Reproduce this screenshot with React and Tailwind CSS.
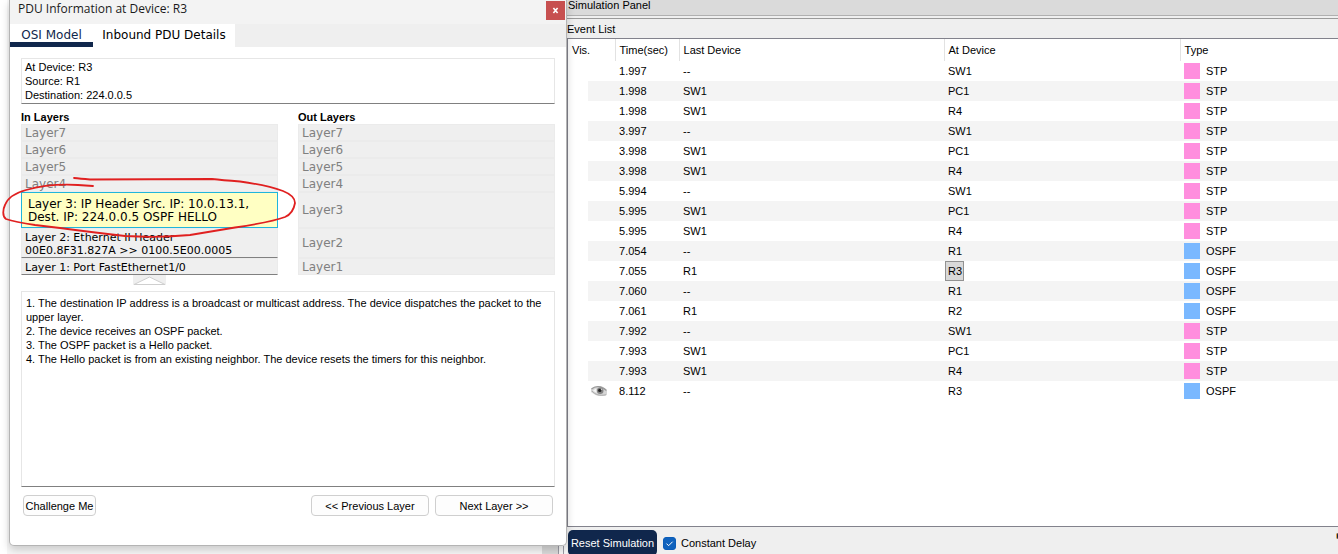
import React from "react";

const STP = "bg-[#ff8ede]";
const OSPF = "bg-[#7ab8ff]";

const events = [
  ["1.997", "--", "SW1", "STP"],
  ["1.998", "SW1", "PC1", "STP"],
  ["1.998", "SW1", "R4", "STP"],
  ["3.997", "--", "SW1", "STP"],
  ["3.998", "SW1", "PC1", "STP"],
  ["3.998", "SW1", "R4", "STP"],
  ["5.994", "--", "SW1", "STP"],
  ["5.995", "SW1", "PC1", "STP"],
  ["5.995", "SW1", "R4", "STP"],
  ["7.054", "--", "R1", "OSPF"],
  ["7.055", "R1", "R3", "OSPF"],
  ["7.060", "--", "R1", "OSPF"],
  ["7.061", "R1", "R2", "OSPF"],
  ["7.992", "--", "SW1", "STP"],
  ["7.993", "SW1", "PC1", "STP"],
  ["7.993", "SW1", "R4", "STP"],
  ["8.112", "--", "R3", "OSPF"],
];
const SELECTED = 10;

const outLayers = [
  ["Layer7", "h-[17px]"],
  ["Layer6", "h-[17px]"],
  ["Layer5", "h-[17px]"],
  ["Layer4", "h-[17px]"],
  ["Layer3", "h-9"],
  ["Layer2", "h-[30px]"],
  ["Layer1", "h-[17px]"],
];

const verdana = "font-['DejaVu_Sans',Verdana,sans-serif]";

function EyeIcon() {
  return (
    <svg viewBox="0 0 16 12" className="h-3 w-4" role="img" aria-label="Visible">
      <path d="M0 4 C3 1 9 0 13 2.5 L16 6 V10 C11 12 5 11.5 0 7Z" fill="#d6d6d6" />
      <path d="M0.5 4 C4 0.8 10 0.4 15.5 5.5" fill="none" stroke="#9a9a9a" strokeWidth="1.4" />
      <path d="M1 6 C4 9.8 9 11 15 9.8" fill="none" stroke="#ababab" strokeWidth="1" />
      <path d="M2 5.5 L5 3.5 L5.5 8Z" fill="#f6f6f6" />
      <circle cx="9.2" cy="5.8" r="3.3" fill="#858585" />
      <circle cx="8.8" cy="5.4" r="1.7" fill="#262626" />
      <circle cx="10.6" cy="4.4" r="0.8" fill="#c8c8c8" />
    </svg>
  );
}

function LayerRow({ size, children }) {
  return (
    <li className={`flex items-center border border-[#ebebeb] bg-[#efefef] px-[3px] pt-px text-[#808080] ${size}`}>
      {children}
    </li>
  );
}

function PushButton({ className, children }) {
  return (
    <button type="button" className={`h-[21px] rounded-[4px] border border-[#cfcfcf] bg-[#fdfdfd] text-center ${className}`}>
      {children}
    </button>
  );
}

function PduWindow() {
  return (
    <section className="relative z-10 flex min-h-0 flex-1 flex-col rounded-b-[5px] border border-t-0 border-[#b4b4b4] bg-white shadow-[0_4px_8px_rgba(0,0,0,0.18)]">
      <header className="flex h-6 items-start justify-between bg-[#f3f3f3] pl-2 pr-px">
        <h1 className="font-['Open_Sans','Segoe_UI',sans-serif] text-[12px] leading-[18px] text-[#1a1a1a]">
          PDU Information at Device: R3
        </h1>
        <button type="button" aria-label="Close" className="mt-px flex h-[19px] w-[19px] items-center justify-center bg-[#c75050]">
          <svg viewBox="0 0 7 7" className="h-[7px] w-[7px]">
            <path d="M1.4 1 L5.6 6 M5.6 1 L1.4 6" stroke="#fff" strokeWidth="1.6" />
          </svg>
        </button>
      </header>

      <div role="tablist" className={`flex h-[23px] bg-[#efefef] text-[12px] ${verdana}`}>
        <button type="button" role="tab" aria-selected="true" className="flex h-full w-[83px] items-end justify-center whitespace-nowrap border-b-[5px] border-[#10274c] bg-white leading-[13px] text-[#10274c]">
          OSI Model
        </button>
        <button type="button" role="tab" aria-selected="false" className="flex h-full w-[142px] items-end justify-center whitespace-nowrap border-b-[5px] border-white bg-white leading-[13px]">
          Inbound PDU Details
        </button>
      </div>

      <div className="flex min-h-0 flex-1 flex-col px-[11px] pt-[11px]">
        <div className="border border-[#e6e6e6] border-b-[#808080] px-[3px] py-px leading-[14px]">
          <p>At Device: R3</p>
          <p>Source: R1</p>
          <p>Destination: 224.0.0.5</p>
        </div>

        <div className="mt-1.5 grid grid-cols-2 gap-5">
          <div className="relative">
            <h2 className="font-bold leading-[14px]">In Layers</h2>
            <ul className={`text-[12px] leading-[13px] ${verdana}`}>
              <LayerRow size="h-[17px]">Layer7</LayerRow>
              <LayerRow size="h-[17px]">Layer6</LayerRow>
              <LayerRow size="h-[17px]">Layer5</LayerRow>
              <LayerRow size="h-[17px]">Layer4</LayerRow>
              <li className="flex h-9 items-center border border-[#1fb5dc] bg-[#ffffc3] px-1.5 pt-px">
                Layer 3: IP Header Src. IP: 10.0.13.1,<br />Dest. IP: 224.0.0.5 OSPF HELLO
              </li>
              <li className="flex h-[30px] items-center border border-[#ebebeb] border-b-[#808080] bg-[#efefef] px-[3px] pt-px text-[11px]">
                Layer 2: Ethernet II Header<br />00E0.8F31.827A &gt;&gt; 0100.5E00.0005
              </li>
              <li className="flex h-[17px] items-center border border-[#ebebeb] border-b-[#808080] bg-[#efefef] px-[3px] pt-px text-[11px]">
                Layer 1: Port FastEthernet1/0
              </li>
            </ul>
            <svg viewBox="0 0 300 76" className="pointer-events-none absolute -left-[21px] top-[61px] h-[76px] w-[300px] max-w-none" aria-hidden="true">
              <path
                d="M74 7 Q80 7.5 90 8.5 L212 8 Q222 9 240 10.5 Q266 14 283 20 C293 24 295 28 295 32 C294 38 292 43 285 46 Q272 51 235 56.5 L190 64 Q160 67 125 65 Q90 61 60 57 L35 54 Q15 51 6 48 C2 45 3 38 5 34 C8 26 15 22 26 19 C40 15 60 13 78 14 L93 15"
                fill="none" stroke="#e02020" strokeWidth="1.8" strokeLinecap="round" strokeLinejoin="round"
              />
            </svg>
          </div>
          <div>
            <h2 className="font-bold leading-[14px]">Out Layers</h2>
            <ul className={`text-[12px] leading-[13px] ${verdana}`}>
              {outLayers.map(([name, size]) => (
                <LayerRow key={name} size={size}>{name}</LayerRow>
              ))}
            </ul>
          </div>
        </div>

        <button type="button" aria-label="Collapse layers" className="ml-28 h-[10px] w-[33px] bg-[#efefef]">
          <svg viewBox="0 0 33 10" className="h-[10px] w-[33px]">
            <path d="M1 9.5 L16.5 2 L32 9.5Z" fill="#fff" stroke="#cfcfcf" />
          </svg>
        </button>

        <div className="mt-1.5 min-h-0 flex-1 border border-[#e6e6e6] border-b-[#808080] px-1 pt-1 leading-[14px]">
          <p>1. The destination IP address is a broadcast or multicast address. The device dispatches the packet to the upper layer.</p>
          <p>2. The device receives an OSPF packet.</p>
          <p>3. The OSPF packet is a Hello packet.</p>
          <p>4. The Hello packet is from an existing neighbor. The device resets the timers for this neighbor.</p>
        </div>

        <div className="flex gap-1.5 px-0.5 pb-[29px] pt-2">
          <PushButton className="mr-auto w-[73px]">Challenge Me</PushButton>
          <PushButton className="w-[118px]">&lt;&lt; Previous Layer</PushButton>
          <PushButton className="w-[118px]">Next Layer &gt;&gt;</PushButton>
        </div>
      </div>
    </section>
  );
}

function SimulationPanel() {
  return (
    <section className="flex min-w-0 flex-1 flex-col bg-[#efefef]">
      <h1 className="h-4 border-b border-[#b0b0b0] bg-[#dadada] pl-px leading-[10px]">Simulation Panel</h1>
      <h2 className="mt-0.5 h-5 border-t border-[#9a9a9a] leading-[20px]">Event List</h2>
      <div className="min-h-0 flex-1 border border-r-0 border-[#82828c] bg-white">
        <table className="w-full table-fixed border-collapse text-left">
          <colgroup>
            <col className="w-5" />
            <col className="w-[27px]" />
            <col className="w-16" />
            <col className="w-[265px]" />
            <col className="w-[236px]" />
            <col />
          </colgroup>
          <thead>
            <tr className="h-[22px]">
              <th colSpan={2} className="p-0 pl-1 font-normal">Vis.</th>
              <th className="border-l border-[#e2e2e2] p-0 pl-1 font-normal">Time(sec)</th>
              <th className="border-l border-[#e2e2e2] p-0 pl-1 font-normal">Last Device</th>
              <th className="border-l border-[#e2e2e2] p-0 pl-1 font-normal">At Device</th>
              <th className="border-l border-[#e2e2e2] p-0 pl-1 font-normal">Type</th>
            </tr>
          </thead>
          <tbody>
            {events.map(([time, last, at, type], i) => {
              const stripe = i % 2 ? "bg-[#f4f4f4]" : "bg-white";
              return (
                <tr key={i} className="h-5">
                  <td className="p-0" />
                  <td className={`p-0 pl-[3px] ${stripe}`}>{i === events.length - 1 && <EyeIcon />}</td>
                  <td className={`p-0 pl-1 ${stripe}`}>{time}</td>
                  <td className={`p-0 pl-1 ${stripe}`}>{last}</td>
                  <td className={`p-0 ${stripe}`}>
                    {i === SELECTED ? (
                      <span className="ml-px inline-flex h-5 w-[19px] items-center border border-[#929292] bg-[#d9d9d9] pl-[2px] align-top">{at}</span>
                    ) : (
                      <span className="pl-1">{at}</span>
                    )}
                  </td>
                  <td className={`p-0 pl-1 ${stripe}`}>
                    <span className="flex items-center gap-1.5">
                      <span className={`h-4 w-4 ${type === "STP" ? STP : OSPF}`} />
                      {type}
                    </span>
                  </td>
                </tr>
              );
            })}
          </tbody>
        </table>
      </div>
      <footer className="flex h-[27px] items-start pl-px">
        <button type="button" className="mt-[3px] h-[26px] w-[89px] shrink-0 rounded-[5px] bg-[#10274c] text-white">
          Reset Simulation
        </button>
        <label className="ml-1.5 mt-[9px] flex items-center gap-[5px]">
          <span className="relative h-[13px] w-[13px]">
            <input type="checkbox" defaultChecked className="peer block h-[13px] w-[13px] appearance-none rounded-[3px] border border-[#0a5cb8] bg-white checked:bg-[#0f62bd]" />
            <svg viewBox="0 0 13 13" className="pointer-events-none absolute inset-0 hidden h-[13px] w-[13px] peer-checked:block">
              <path d="M3.5 6.6 L5.6 8.7 L9.6 4.7" fill="none" stroke="#fff" strokeWidth="1" />
            </svg>
          </span>
          <span className="leading-[14px]">Constant Delay</span>
        </label>
        <span className="ml-auto mt-1.5 h-1.5 w-0.5 rounded-l-full border-l border-[#e8a040] bg-[#10274c]" />
      </footer>
    </section>
  );
}

export default function App() {
  return (
    <main className="flex h-screen min-h-[540px] overflow-hidden bg-white font-['Liberation_Sans',Arial,sans-serif] text-[11px] leading-[14px] text-black">
      <div className="ml-[7px] flex w-[560px] shrink-0 flex-col bg-[#f7f7f7] pl-0.5">
        <PduWindow />
        <div className="flex h-2 justify-end">
          <div className="w-4 bg-[#dadada]" />
          <div className="mr-[3px] w-1.5 border-x border-[#9a9aa4]" />
        </div>
      </div>
      <SimulationPanel />
    </main>
  );
}
